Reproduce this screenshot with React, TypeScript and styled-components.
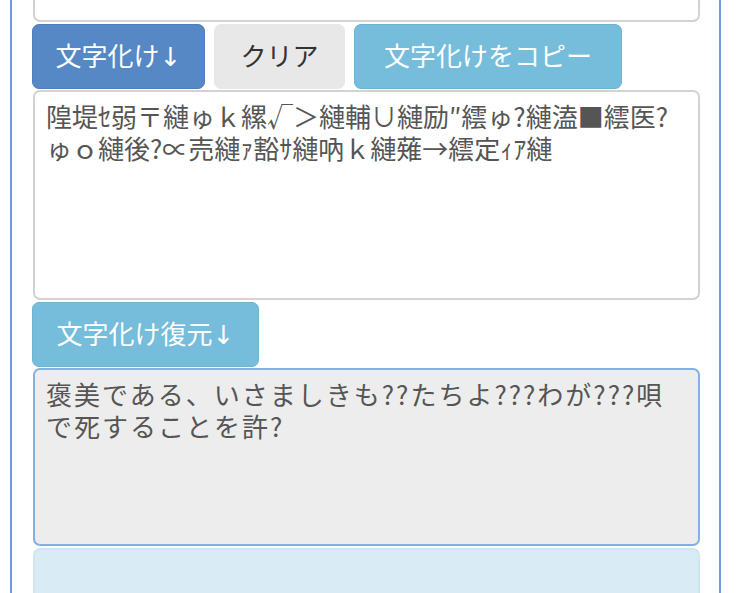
import React from 'react';
import styled, {createGlobalStyle} from 'styled-components';

const TEXT_FONT = `"Noto Sans CJK JP", "Noto Sans", sans-serif`;
const BUTTON_FONT = `"DejaVu Sans", "Noto Sans CJK JP", sans-serif`;

const GlobalStyle = createGlobalStyle`
  html, body {
    margin: 0;
    padding: 0;
    background: #ffffff;
    overflow: hidden;
  }
  body {
    font-family: ${TEXT_FONT};
  }
`;

const StyledViewport = styled.div`
  height: 593px;
  overflow: hidden;
  padding-left: 10px;
`;

// the page is scrolled: the first text box is mostly above the fold
const StyledPanel = styled.main`
  width: 667px;
  margin-top: -100px;
  padding: 0 19px 0 21px;
  border-left: 2px solid #6d9bd7;
  border-right: 2px solid #6d9bd7;
  display: flex;
  flex-direction: column;
`;

const StyledTextBox = styled.textarea<{$readonlyTone?: boolean; $height: number; $spacing?: number}>`
  display: block;
  box-sizing: border-box;
  width: 100%;
  height: ${({$height}) => $height}px;
  margin: 0;
  padding: 8px 12px 8px 11px;
  font-family: ${TEXT_FONT};
  font-size: 26px;
  line-height: 32px;
  letter-spacing: ${({$spacing}) => $spacing || 0}px;
  color: #555555;
  resize: none;
  outline: none;
  overflow: hidden;
  border-radius: 7px;
  border: 2px solid ${({$readonlyTone}) => ($readonlyTone ? '#84b0e6' : '#d2d2d2')};
  background: ${({$readonlyTone}) => ($readonlyTone ? '#ededed' : '#ffffff')};
`;

const StyledButtonRow = styled.div`
  display: flex;
  gap: 9px;
  margin: 2px 0 1px -1px;
`;

const buttonColors = {
  primary: {bg: '#5588c5', border: '#4d7fbc', text: '#ffffff'},
  plain: {bg: '#e8e8e8', border: '#e8e8e8', text: '#333333'},
  info: {bg: '#76bcdb', border: '#6cb3d6', text: '#ffffff'},
};

const StyledButton = styled.button<{$variant: keyof typeof buttonColors; $width: number}>`
  box-sizing: border-box;
  width: ${({$width}) => $width}px;
  height: 65px;
  padding: 0;
  display: flex;
  align-items: center;
  justify-content: center;
  font-family: ${BUTTON_FONT};
  font-size: 26px;
  line-height: 32px;
  border-radius: 7px;
  cursor: pointer;
  white-space: nowrap;
  color: ${({$variant}) => buttonColors[$variant].text};
  background: ${({$variant}) => buttonColors[$variant].bg};
  border: 1px solid ${({$variant}) => buttonColors[$variant].border};
`;

const StyledSingleButton = styled.div`
  display: flex;
  margin: 2px 0 1px -1px;
`;

const StyledHintBox = styled.div`
  box-sizing: border-box;
  height: 120px;
  margin-top: 2px;
  border: 2px solid #cfe6f1;
  border-bottom: none;
  border-radius: 7px 7px 0 0;
  background: #d9ebf4;
`;

const garbled =
  '隍堤ｾ弱〒縺ゅｋ縲√＞縺輔∪縺励″繧ゅ?縺溘■繧医?ゅｏ縺後?∝売縺ｧ豁ｻ縺吶ｋ縺薙→繧定ｨｱ縺';
const restored = '褒美である、いさましきも??たちよ???わが???唄で死することを許?';

const App = () => {
  return (
    <>
      <GlobalStyle />
      <StyledViewport>
        <StyledPanel>
          <StyledTextBox $height={122} readOnly defaultValue="" />
          <StyledButtonRow>
            <StyledButton $variant="primary" $width={173}>文字化け↓</StyledButton>
            <StyledButton $variant="plain" $width={131}>クリア</StyledButton>
            <StyledButton $variant="info" $width={268}>文字化けをコピー</StyledButton>
          </StyledButtonRow>
          <StyledTextBox $height={210} readOnly value={garbled} />
          <StyledSingleButton>
            <StyledButton $variant="info" $width={227}>文字化け復元↓</StyledButton>
          </StyledSingleButton>
          <StyledTextBox $readonlyTone $height={178} $spacing={2} readOnly value={restored} />
          <StyledHintBox />
        </StyledPanel>
      </StyledViewport>
    </>
  );
};

export default App;
